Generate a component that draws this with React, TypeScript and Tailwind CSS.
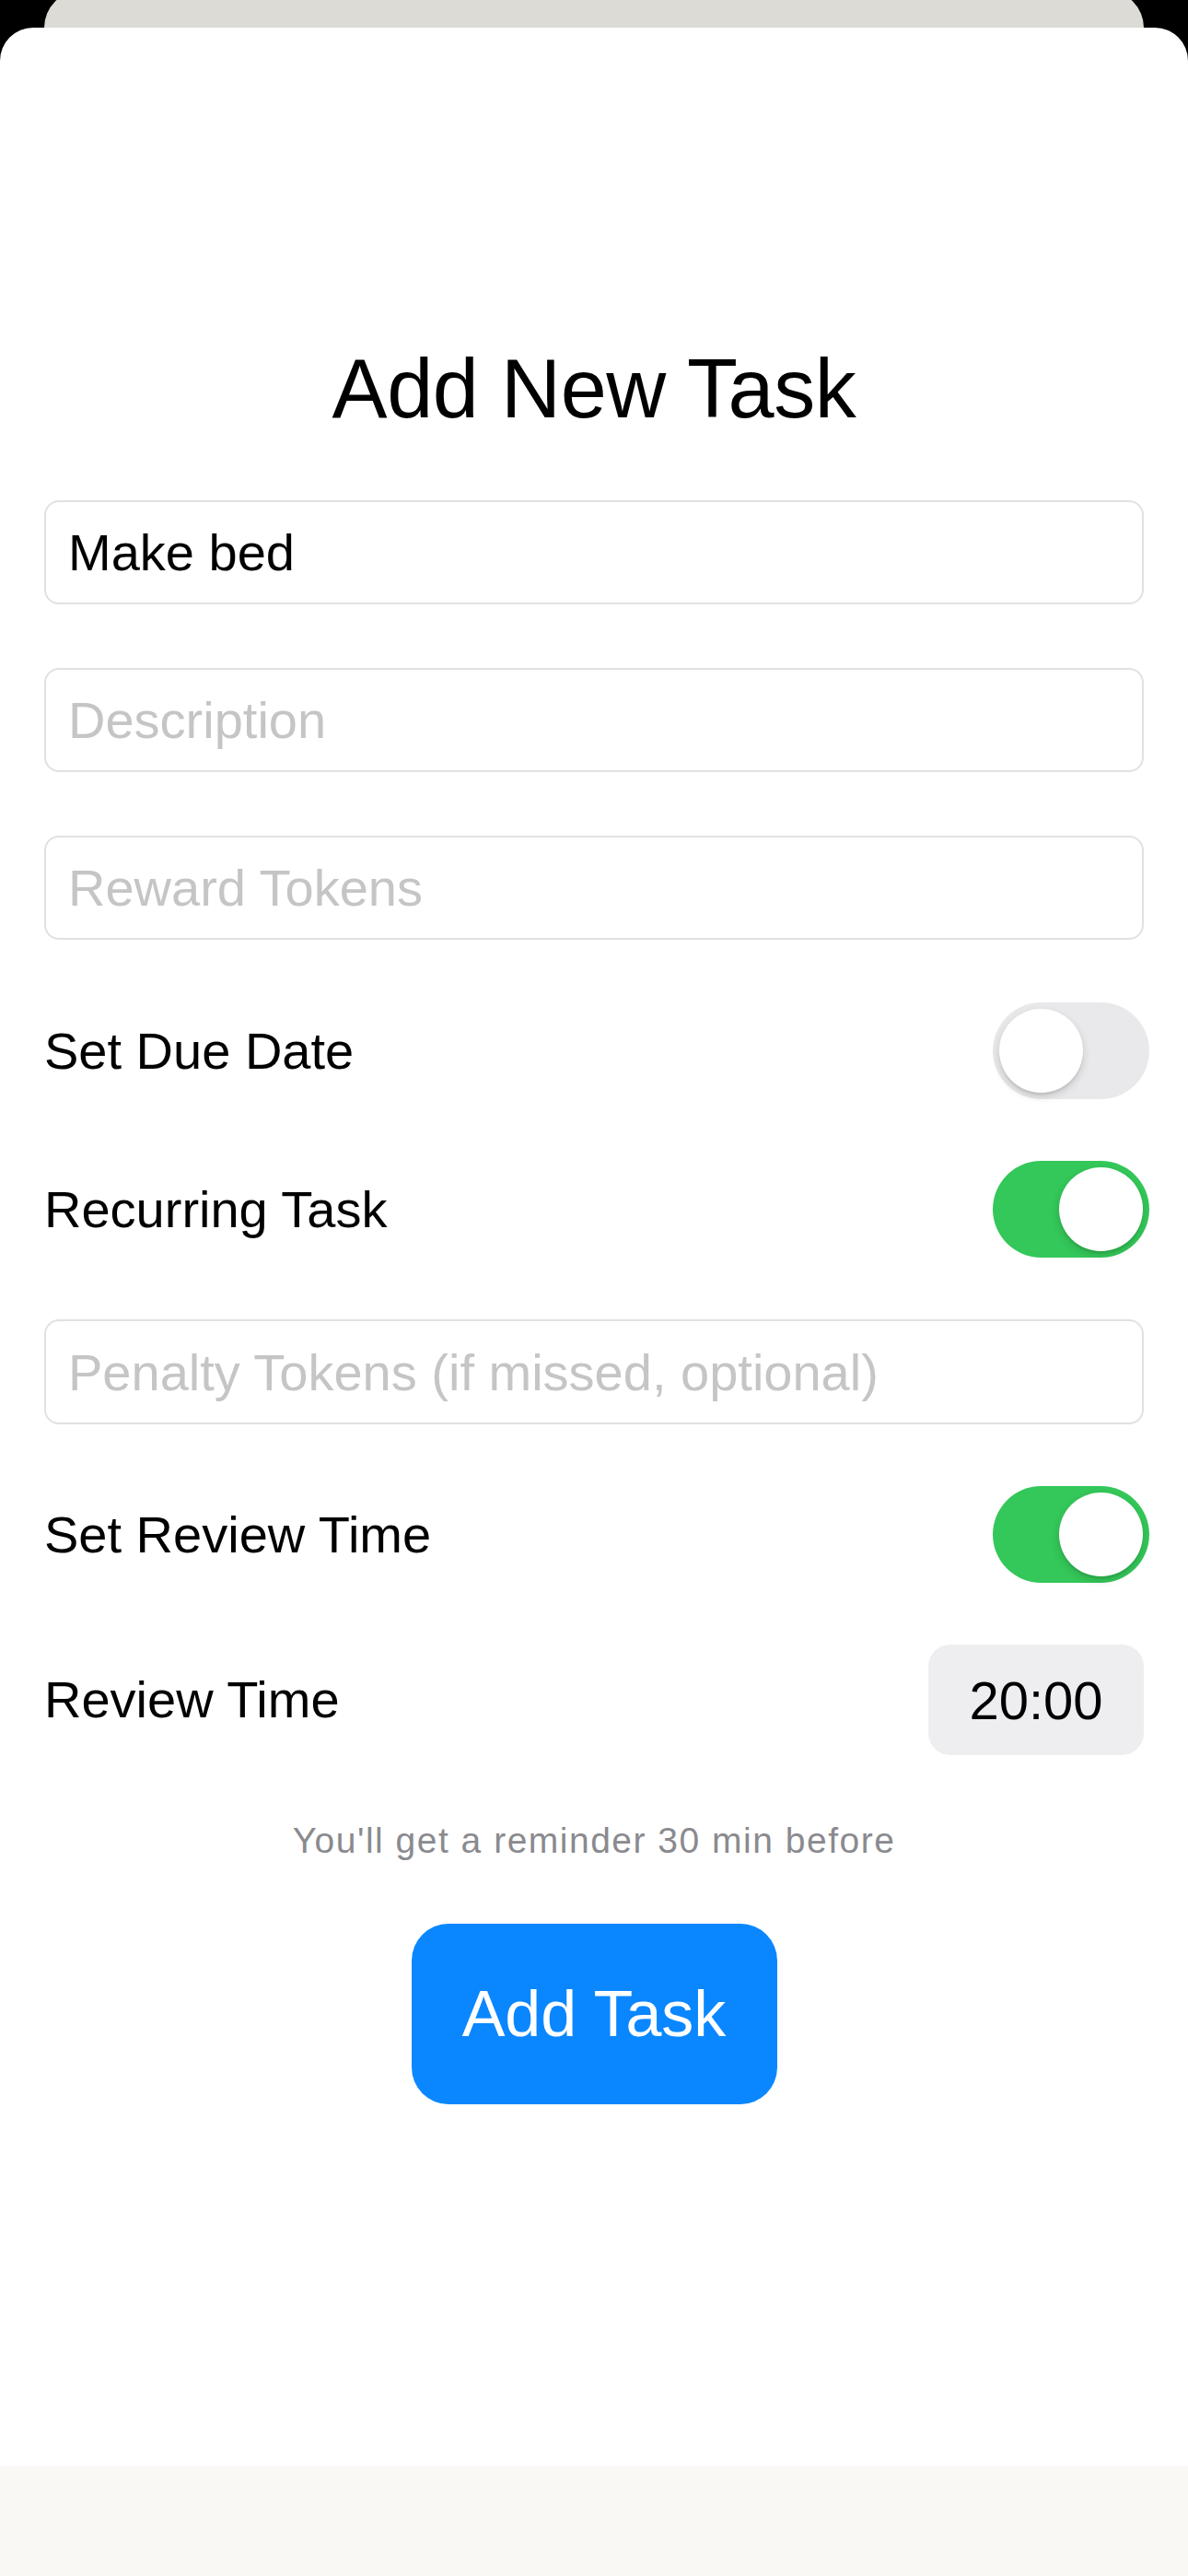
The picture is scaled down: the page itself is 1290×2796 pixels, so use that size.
import React from 'react';

const Toggle = ({ on }: { on: boolean }) => (
  <div
    className={`-mr-[6px] flex h-[105px] w-[170px] shrink-0 items-center rounded-full px-[7px] ${
      on ? 'justify-end bg-[#34c759]' : 'justify-start bg-[#e9e9eb]'
    }`}
  >
    <div className="h-[91px] w-[91px] rounded-full bg-white shadow-[0_4px_10px_rgba(0,0,0,0.15),0_3px_1px_rgba(0,0,0,0.06)]" />
  </div>
);

const Field = ({ placeholder, value, tall }: { placeholder: string; value?: string; tall?: boolean }) => (
  <input
    readOnly
    defaultValue={value}
    placeholder={placeholder}
    className={`w-full ${tall ? 'h-[114px]' : 'h-[113px]'} rounded-[16px] border-2 border-[#e1e1e3] bg-white pl-[24px] text-[56px] text-black outline-none placeholder:text-[#c5c5c7]`}
  />
);

const Row = ({ label, children }: { label: string; children: React.ReactNode }) => (
  <div className="flex items-center justify-between">
    <span className="text-[56px] leading-[68px] text-black">{label}</span>
    {children}
  </div>
);

export default function App() {
  return (
    <div className="min-h-[2796px] bg-black font-['Liberation_Sans',Arial,sans-serif]">
      <div className="mx-[48px] -mt-[10px] h-[40px] rounded-t-[40px] bg-[#dcdbd6]" />
      <div className="flex h-[2766px] flex-col overflow-hidden rounded-t-[36px] bg-white">
        <div className="flex flex-1 flex-col px-[48px] pt-[342px]">
          <h1 className="h-[100px] text-center text-[90px] leading-[100px] tracking-[-0.4px] text-black">Add New Task</h1>

          <div className="mt-[71px]">
            <Field placeholder="Task Title" value="Make bed" />
          </div>
          <div className="mt-[69px]">
            <Field placeholder="Description" />
          </div>
          <div className="mt-[69px]">
            <Field placeholder="Reward Tokens" />
          </div>

          <div className="mt-[68px]">
            <Row label="Set Due Date">
              <Toggle on={false} />
            </Row>
          </div>
          <div className="mt-[67px]">
            <Row label="Recurring Task">
              <Toggle on />
            </Row>
          </div>

          <div className="mt-[67px]">
            <Field placeholder="Penalty Tokens (if missed, optional)" tall />
          </div>

          <div className="mt-[67px]">
            <Row label="Set Review Time">
              <Toggle on />
            </Row>
          </div>
          <div className="mt-[67px]">
            <Row label="Review Time">
              <div className="flex h-[120px] w-[234px] items-center justify-center rounded-[24px] bg-[#eeeef0] text-[58px] text-black">
                20:00
              </div>
            </Row>
          </div>

          <p className="mt-[70px] h-[46px] text-center text-[39px] leading-[46px] tracking-[1.5px] text-[#8a8a8e]">
            You'll get a reminder 30 min before
          </p>

          <div className="mt-[67px] flex justify-center">
            <button className="flex h-[196px] w-[397px] items-center justify-center rounded-[40px] bg-[#0a87ff] text-[70px] text-white">
              Add Task
            </button>
          </div>
        </div>
        <div className="h-[119px] bg-[#f9f8f4]" />
      </div>
    </div>
  );
}
